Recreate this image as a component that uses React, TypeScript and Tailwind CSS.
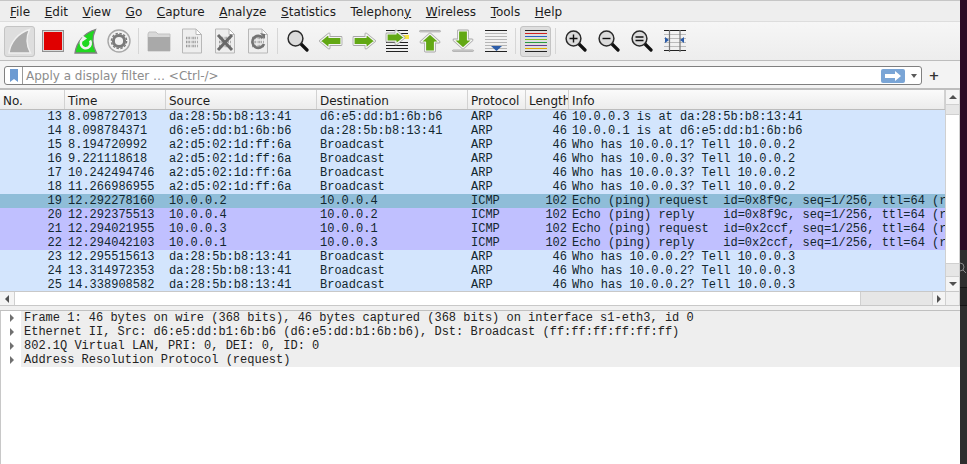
import React from "react";

const menus: [string, string, string][] = [
  ["", "F", "ile"], ["", "E", "dit"], ["", "V", "iew"], ["", "G", "o"], ["", "C", "apture"],
  ["", "A", "nalyze"], ["", "S", "tatistics"], ["Telephon", "y", ""], ["", "W", "ireless"], ["", "T", "ools"], ["", "H", "elp"],
];

type Row = [string, string, string, string, string, string, string, string];
const B = "bg-[#d3e5fd]", P = "bg-[#c0c0ff]", S = "bg-[#8fbdd8]";
const rows: Row[] = [
  ["13", "8.098727013", "da:28:5b:b8:13:41", "d6:e5:dd:b1:6b:b6", "ARP", "46", "10.0.0.3 is at da:28:5b:b8:13:41", B],
  ["14", "8.098784371", "d6:e5:dd:b1:6b:b6", "da:28:5b:b8:13:41", "ARP", "46", "10.0.0.1 is at d6:e5:dd:b1:6b:b6", B],
  ["15", "8.194720992", "a2:d5:02:1d:ff:6a", "Broadcast", "ARP", "46", "Who has 10.0.0.1? Tell 10.0.0.2", B],
  ["16", "9.221118618", "a2:d5:02:1d:ff:6a", "Broadcast", "ARP", "46", "Who has 10.0.0.3? Tell 10.0.0.2", B],
  ["17", "10.242494746", "a2:d5:02:1d:ff:6a", "Broadcast", "ARP", "46", "Who has 10.0.0.3? Tell 10.0.0.2", B],
  ["18", "11.266986955", "a2:d5:02:1d:ff:6a", "Broadcast", "ARP", "46", "Who has 10.0.0.3? Tell 10.0.0.2", B],
  ["19", "12.292278160", "10.0.0.2", "10.0.0.4", "ICMP", "102", "Echo (ping) request  id=0x8f9c, seq=1/256, ttl=64 (r", S],
  ["20", "12.292375513", "10.0.0.4", "10.0.0.2", "ICMP", "102", "Echo (ping) reply    id=0x8f9c, seq=1/256, ttl=64 (r", P],
  ["21", "12.294021955", "10.0.0.3", "10.0.0.1", "ICMP", "102", "Echo (ping) request  id=0x2ccf, seq=1/256, ttl=64 (r", P],
  ["22", "12.294042103", "10.0.0.1", "10.0.0.3", "ICMP", "102", "Echo (ping) reply    id=0x2ccf, seq=1/256, ttl=64 (r", P],
  ["23", "12.295515613", "da:28:5b:b8:13:41", "Broadcast", "ARP", "46", "Who has 10.0.0.2? Tell 10.0.0.3", B],
  ["24", "13.314972353", "da:28:5b:b8:13:41", "Broadcast", "ARP", "46", "Who has 10.0.0.2? Tell 10.0.0.3", B],
  ["25", "14.338908582", "da:28:5b:b8:13:41", "Broadcast", "ARP", "46", "Who has 10.0.0.2? Tell 10.0.0.3", B],
];

const details = [
  "Frame 1: 46 bytes on wire (368 bits), 46 bytes captured (368 bits) on interface s1-eth3, id 0",
  "Ethernet II, Src: d6:e5:dd:b1:6b:b6 (d6:e5:dd:b1:6b:b6), Dst: Broadcast (ff:ff:ff:ff:ff:ff)",
  "802.1Q Virtual LAN, PRI: 0, DEI: 0, ID: 0",
  "Address Resolution Protocol (request)",
];

const FIN = "M2 25C3.5 14 11 5 22.5 1.5C19 9 19 17 23.5 25Z";

const Doc = ({ children }: { children?: React.ReactNode }) => (
  <svg width="22" height="26" viewBox="0 0 22 26">
    <path d="M1.5 1H15L20.5 6.5V25H1.5Z" fill="#eeeeee" stroke="#b8b8b8" />
    <path d="M15 1V6.5H20.5Z" fill="#fff" stroke="#b8b8b8" />
    {[10, 14, 18].map((y) => (
      <line key={y} x1="5" x2="17" y1={y} y2={y} stroke="#9c9c9c" strokeWidth="2.6" strokeDasharray="1 .6 1 .6 1 1.4" />
    ))}
    {children}
  </svg>
);

const ArrowPath = ({ d }: { d: string }) => (
  <>
    <path d={d} fill="none" stroke="#a6a6a6" strokeWidth="2.8" strokeLinejoin="round" />
    <path d={d} fill="#62a814" stroke="#f4f4f4" strokeWidth="1.2" strokeLinejoin="round" />
  </>
);

const Lens = ({ glyph }: { glyph?: string }) => (
  <svg width="22" height="22" viewBox="0 0 22 22">
    <line x1="13" y1="13" x2="20" y2="20" stroke="#111" strokeWidth="3.2" strokeLinecap="round" />
    <circle cx="8.5" cy="8.5" r="7.4" fill="#dcdcdc" stroke="#2a2a2a" strokeWidth="1.5" />
    {glyph === "+" && <path d="M4.5 8.5H12.5M8.5 4.5V12.5" stroke="#111" strokeWidth="1.4" />}
    {glyph === "-" && <path d="M4.5 8.5H12.5" stroke="#111" strokeWidth="1.4" />}
    {glyph === "=" && <path d="M4.5 7H12.5M4.5 10.5H12.5" stroke="#111" strokeWidth="1.4" />}
  </svg>
);

const Lines = ({ colors, children }: { colors: string[]; children?: React.ReactNode }) => (
  <svg width="24" height="24" viewBox="0 0 24 24">
    {colors.map((c, i) => <rect key={i} x="1" y={1 + i * 3} width="22" height="1" fill={c} shapeRendering="crispEdges" />)}
    {children}
  </svg>
);

const Sep = () => <div className="w-px h-[26px] bg-[#d6d6d6] mx-[2px]" />;
const Btn = ({ children, on }: { children: React.ReactNode; on?: boolean }) => (
  <div className={`w-[31px] h-[31px] flex items-center justify-center rounded-[3px] ${on ? "bg-[#dedede] border border-[#c4c4c4]" : ""}`}>{children}</div>
);

const cols = [
  ["No.", "w-[65px]"], ["Time", "w-[101px]"], ["Source", "w-[151px]"], ["Destination", "w-[151px]"],
  ["Protocol", "w-[58px]"], ["Length", "w-[43px]"], ["Info", "flex-1"],
];

export default function App() {
  return (
    <div className="w-[967px] h-[464px] flex overflow-hidden bg-[#2c0a24]" style={{ fontFamily: '"DejaVu Sans", sans-serif' }}>
      <div className="w-[960px] h-full flex flex-col bg-white text-[#1c1c1c]">
        <div className="h-[22px] shrink-0 flex items-center gap-[14.6px] pl-[10px] pt-px text-[12px] bg-[#eeeeee] border-t border-t-[#c6c6c6] border-b border-b-[#dddddd]">
          {menus.map(([a, u, b]) => (
            <span key={u + b}>{a}<span className="underline">{u}</span>{b}</span>
          ))}
        </div>
        <div className="h-[39px] shrink-0 flex items-center pl-[4px] gap-[2px] bg-gradient-to-b from-[#f6f6f6] to-[#ededed] border-b border-[#bdbdbd]">
          <Btn on>
            <svg width="26" height="27" viewBox="0 0 26 27"><path d={FIN} fill="#ababab" stroke="#f0f0f0" strokeWidth="1.4" /></svg>
          </Btn>
          <Btn><div className="w-[22px] h-[22px] bg-[#e00000] border-2 border-[#d8d8d8] outline outline-1 -outline-offset-1 outline-[#909090]" /></Btn>
          <Btn>
            <svg width="26" height="27" viewBox="0 0 26 27">
              <path d={FIN} fill="#20d820" stroke="#7f7f7f" strokeWidth="1.3" />
              <path d="M17 12.5A5 5 0 1 1 11 10.5" fill="none" stroke="#f2f2f2" strokeWidth="2.6" />
              <path d="M9 7L14 10.5L9.5 13.5Z" fill="#f2f2f2" />
            </svg>
          </Btn>
          <Btn>
            <svg width="24" height="24" viewBox="0 0 24 24">
              <circle cx="12" cy="12" r="11" fill="#f2f2f2" stroke="#a8a8a8" strokeWidth="1.4" />
              <circle cx="12" cy="12" r="5.6" fill="none" stroke="#7a7a7a" strokeWidth="3" />
              <circle cx="12" cy="12" r="7.6" fill="none" stroke="#7a7a7a" strokeWidth="1.4" strokeDasharray="2.4 1.6" />
            </svg>
          </Btn>
          <Sep />
          <Btn>
            <svg width="24" height="21" viewBox="0 0 24 21">
              <path d="M1 3L2 1H9L11 3H23V20H1Z" fill="#d8d8d8" stroke="#c2c2c2" />
              <rect x="1" y="6" width="22" height="14" fill="#a9a9a9" />
            </svg>
          </Btn>
          <Btn><Doc /></Btn>
          <Btn><Doc><path d="M4 7L18 22M18 7L4 22" stroke="#6a6a6a" strokeWidth="3" /></Doc></Btn>
          <Btn><Doc><path d="M16 10A6 6 0 1 0 17 16" fill="none" stroke="#737373" strokeWidth="2.6" /><path d="M13 5L18 6V11Z" fill="#737373" /></Doc></Btn>
          <Sep />
          <Btn><Lens /></Btn>
          <Btn>
            <svg width="24" height="18" viewBox="0 0 24 18"><ArrowPath d="M1.5 9L10 2V5.5H22V12.5H10V16Z" /></svg>
          </Btn>
          <Btn>
            <svg width="24" height="18" viewBox="0 0 24 18"><ArrowPath d="M22.5 9L14 2V5.5H2V12.5H14V16Z" /></svg>
          </Btn>
          <Btn>
            <svg width="24" height="24" viewBox="0 0 24 24">
              <rect x="10" y="6" width="14" height="4" fill="#f8e444" />
              {[1, 4, 13, 16, 19, 22].map((y) => <rect key={y} x="1" y={y} width="22" height="1" fill="#222" shapeRendering="crispEdges" />)}
              <ArrowPath d="M19 8.5L11 2V5H2V12H11V15Z" />
            </svg>
          </Btn>
          <Btn>
            <svg width="24" height="24" viewBox="0 0 24 24">
              <rect x="1.5" y="1.5" width="21" height="1.4" rx=".7" fill="#ddd" stroke="#999" strokeWidth=".7" />
              <ArrowPath d="M12 5L21 13H16.5V22H7.5V13H3Z" />
            </svg>
          </Btn>
          <Btn>
            <svg width="24" height="24" viewBox="0 0 24 24">
              <rect x="1.5" y="21" width="21" height="1.4" rx=".7" fill="#ddd" stroke="#999" strokeWidth=".7" />
              <ArrowPath d="M12 19L21 11H16.5V2H7.5V11H3Z" />
            </svg>
          </Btn>
          <Btn>
            <Lines colors={["#222", "#b5b5b5", "#b5b5b5", "#b5b5b5", "#b5b5b5", "#b5b5b5", "#b5b5b5", "#222"]}>
              <path d="M7 17H18L12.5 22Z" fill="#2b5ca8" />
            </Lines>
          </Btn>
          <Sep />
          <Btn on>
            <Lines colors={["#222", "#d02020", "#2a62c0", "#80c020", "#2a9a40", "#6a3a90", "#e0a800", "#222"]} />
          </Btn>
          <Sep />
          <Btn><Lens glyph="+" /></Btn>
          <Btn><Lens glyph="-" /></Btn>
          <Btn><Lens glyph="=" /></Btn>
          <Btn>
            <svg width="24" height="24" viewBox="0 0 24 24">
              {[1, 5, 9, 13, 17, 21].map((y) => <rect key={y} x="1" y={y} width="22" height="1" fill={y === 1 || y === 21 ? "#222" : "#bbb"} shapeRendering="crispEdges" />)}
              <path d="M6.5 1V23M17 1V23" stroke="#777" strokeWidth="1.2" />
              <path d="M2 8V14L6 11ZM21 8V14L17 11Z" fill="#2b5ca8" />
            </svg>
          </Btn>
        </div>
        <div className="h-[29px] shrink-0 flex items-center pl-[4px] pt-[2px] bg-[#f3f3f3] border-b-[2px] border-[#bdbdbd]">
          <div className="w-[918px] h-[19px] flex items-center bg-white border border-[#808080] rounded-[3px]">
            <div className="w-[18px] h-full flex items-center justify-center border-r border-[#9a9a9a]">
              <svg width="8" height="13" viewBox="0 0 8 13"><path d="M0 0H8V13L4 10L0 13Z" fill="#6d9bd2" /></svg>
            </div>
            <span className="flex-1 pl-[3px] text-[12px] text-[#8c8c8c]">Apply a display filter … &lt;Ctrl-/&gt;</span>
            <div className="w-[24px] h-[14px] mr-[6px] flex items-center justify-center bg-[#7aa5d6] rounded-[2px]">
              <svg width="16" height="10" viewBox="0 0 16 10"><path d="M0 3H10V0L16 5L10 10V7H0Z" fill="#fff" /></svg>
            </div>
            <div className="w-0 h-0 mr-[4px] border-x-[3.5px] border-x-transparent border-t-[4px] border-t-[#5a5a5a]" />
          </div>
          <span className="w-[24px] text-center text-[13px] font-bold text-[#333]">+</span>
        </div>
        <div className="h-[216px] shrink-0 flex flex-col bg-white">
          <div className="h-[201px] flex overflow-hidden">
            <div className="w-[945px] flex flex-col">
              <div className="h-[20px] shrink-0 flex text-[12px] bg-gradient-to-b from-[#fbfbfb] to-[#ececec] border-b border-[#bcbcbc]">
                {cols.map(([t, w]) => (
                  <div key={t} className={`${w} pl-[3px] pt-[4px] leading-[15px] overflow-hidden whitespace-nowrap border-r border-[#d2d2d2]`}>{t}</div>
                ))}
              </div>
              <div style={{ fontFamily: '"Liberation Mono", monospace' }} className="text-[12px] leading-[14px] text-[#12272e]">
                {rows.map((r) => (
                  <div key={r[0]} className={`h-[14px] shrink-0 flex whitespace-pre overflow-hidden ${r[7]}`}>
                    <span className="w-[65px] shrink-0 pr-[3px] text-right">{r[0]}</span>
                    <span className="w-[101px] shrink-0 pl-[3px]">{r[1]}</span>
                    <span className="w-[151px] shrink-0 pl-[3px]">{r[2]}</span>
                    <span className="w-[151px] shrink-0 pl-[3px]">{r[3]}</span>
                    <span className="w-[58px] shrink-0 pl-[3px]">{r[4]}</span>
                    <span className="w-[43px] shrink-0 pr-[2px] text-right">{r[5]}</span>
                    <span className="flex-1 pl-[3px] overflow-hidden">{r[6]}</span>
                  </div>
                ))}
              </div>
            </div>
            <div className="w-[15px] flex flex-col bg-[#e6e6e6] border-x border-[#d0d0d0]">
              <div className="h-[15px] flex items-center justify-center bg-[#f4f4f4] border-b border-[#d0d0d0]">
                <div className="w-0 h-0 border-x-[4px] border-x-transparent border-b-[4px] border-b-[#505050]" />
              </div>
              <div className="h-[9px]" />
              <div className="h-[150px] bg-white border-y border-[#d0d0d0]" />
              <div className="flex-1" />
              <div className="h-[15px] flex items-center justify-center bg-[#f4f4f4] border-t border-[#d0d0d0]">
                <div className="w-0 h-0 border-x-[4px] border-x-transparent border-t-[4px] border-t-[#505050]" />
              </div>
            </div>
          </div>
          <div className="h-[15px] flex border-y border-[#c8c8c8] bg-[#e6e6e6]">
            <div className="w-[15px] flex items-center justify-center bg-[#f4f4f4] border-r border-[#d0d0d0]">
              <div className="w-0 h-0 border-y-[4px] border-y-transparent border-r-[4px] border-r-[#505050]" />
            </div>
            <div className="w-[846px] bg-white border-r border-[#d0d0d0]" />
            <div className="flex-1" />
            <div className="w-[14px] flex items-center justify-center bg-[#f4f4f4] border-x border-[#d0d0d0]">
              <div className="w-0 h-0 border-y-[4px] border-y-transparent border-l-[4px] border-l-[#505050]" />
            </div>
            <div className="w-[14px] bg-[#f0f0f0] border-r border-[#d0d0d0]" />
          </div>
        </div>
        <div className="h-[5px] shrink-0 bg-[#f0f0f0] border-b border-[#c0c0c0]" />
        <div className="flex-1 bg-white border-l border-[#c8c8c8]" style={{ fontFamily: '"Liberation Mono", monospace' }}>
          {details.map((d) => (
            <div key={d} className="h-[14px] flex items-center text-[12px] leading-[14px] whitespace-pre text-[#222]">
              <div className="w-[20px] shrink-0 flex justify-center pl-[2px]">
                <div className="w-0 h-0 border-y-[4px] border-y-transparent border-l-[4px] border-l-[#707070]" />
              </div>
              <div className="flex-1 h-full pl-[3px] bg-[#eeeeee]">{d}</div>
            </div>
          ))}
        </div>
      </div>
      <div className="w-[7px] h-full flex flex-col">
        <div className="h-[250px] bg-[#2c0a24]" />
        <div className="h-[37px] bg-[#2e2e2e] flex items-center">
          <svg width="7" height="14" viewBox="0 0 7 14"><circle cx="0" cy="5" r="4" fill="none" stroke="#888" /><line x1="3" y1="8" x2="6" y2="11" stroke="#888" /></svg>
        </div>
        <div className="h-[18px] bg-[#262626] border-t border-[#151515]" />
        <div className="flex-1 bg-[#2e2e2e] border-t border-[#151515]" />
      </div>
    </div>
  );
}
